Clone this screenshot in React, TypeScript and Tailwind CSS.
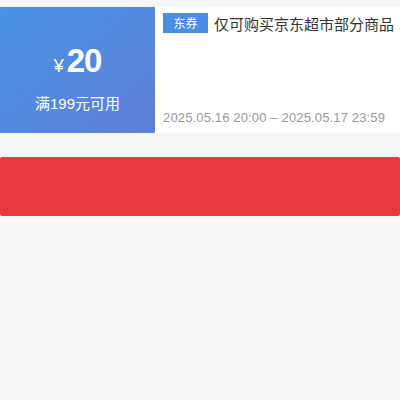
import React from "react";

export default function App() {
  return (
    <div
      className="min-h-screen w-[400px] bg-[#f6f6f6] pt-[7px]"
      style={{ fontFamily: '"Liberation Sans", "Noto Sans CJK SC", sans-serif' }}
    >
      <div className="flex h-[126px] bg-white">
        <div className="flex w-[155px] flex-col items-center justify-center bg-gradient-to-br from-[#4793e3] to-[#5e7fd6] pt-[14px] text-white">
          <div className="flex items-baseline">
            <span className="mr-[3px] text-[18px] leading-none">¥</span>
            <span className="text-[33px] font-bold leading-none tracking-[-1px]">20</span>
          </div>
          <div className="mt-[19px] text-[15px] leading-none">满199元可用</div>
        </div>
        <div className="flex flex-1 flex-col justify-between pl-[8px] pt-[6px] pb-[9px]">
          <div className="flex items-center">
            <span
              className="flex h-[20px] w-[45px] items-center justify-center bg-[#4a8fdf] text-[12px] text-white"
              style={{ fontFamily: '"Noto Sans CJK SC", sans-serif' }}
            >
              东券
            </span>
            <span
              className="ml-[6px] text-[15px] leading-none text-[#333]"
              style={{ fontFamily: '"Noto Sans CJK SC", sans-serif' }}
            >
              仅可购买京东超市部分商品
            </span>
          </div>
          <div className="text-[13px] leading-none tracking-[0.15px] text-[#999]">2025.05.16 20:00 – 2025.05.17 23:59</div>
        </div>
      </div>
      <div className="mt-[24px] h-[59px] rounded-[2px] bg-[#e8393c]" />
    </div>
  );
}
